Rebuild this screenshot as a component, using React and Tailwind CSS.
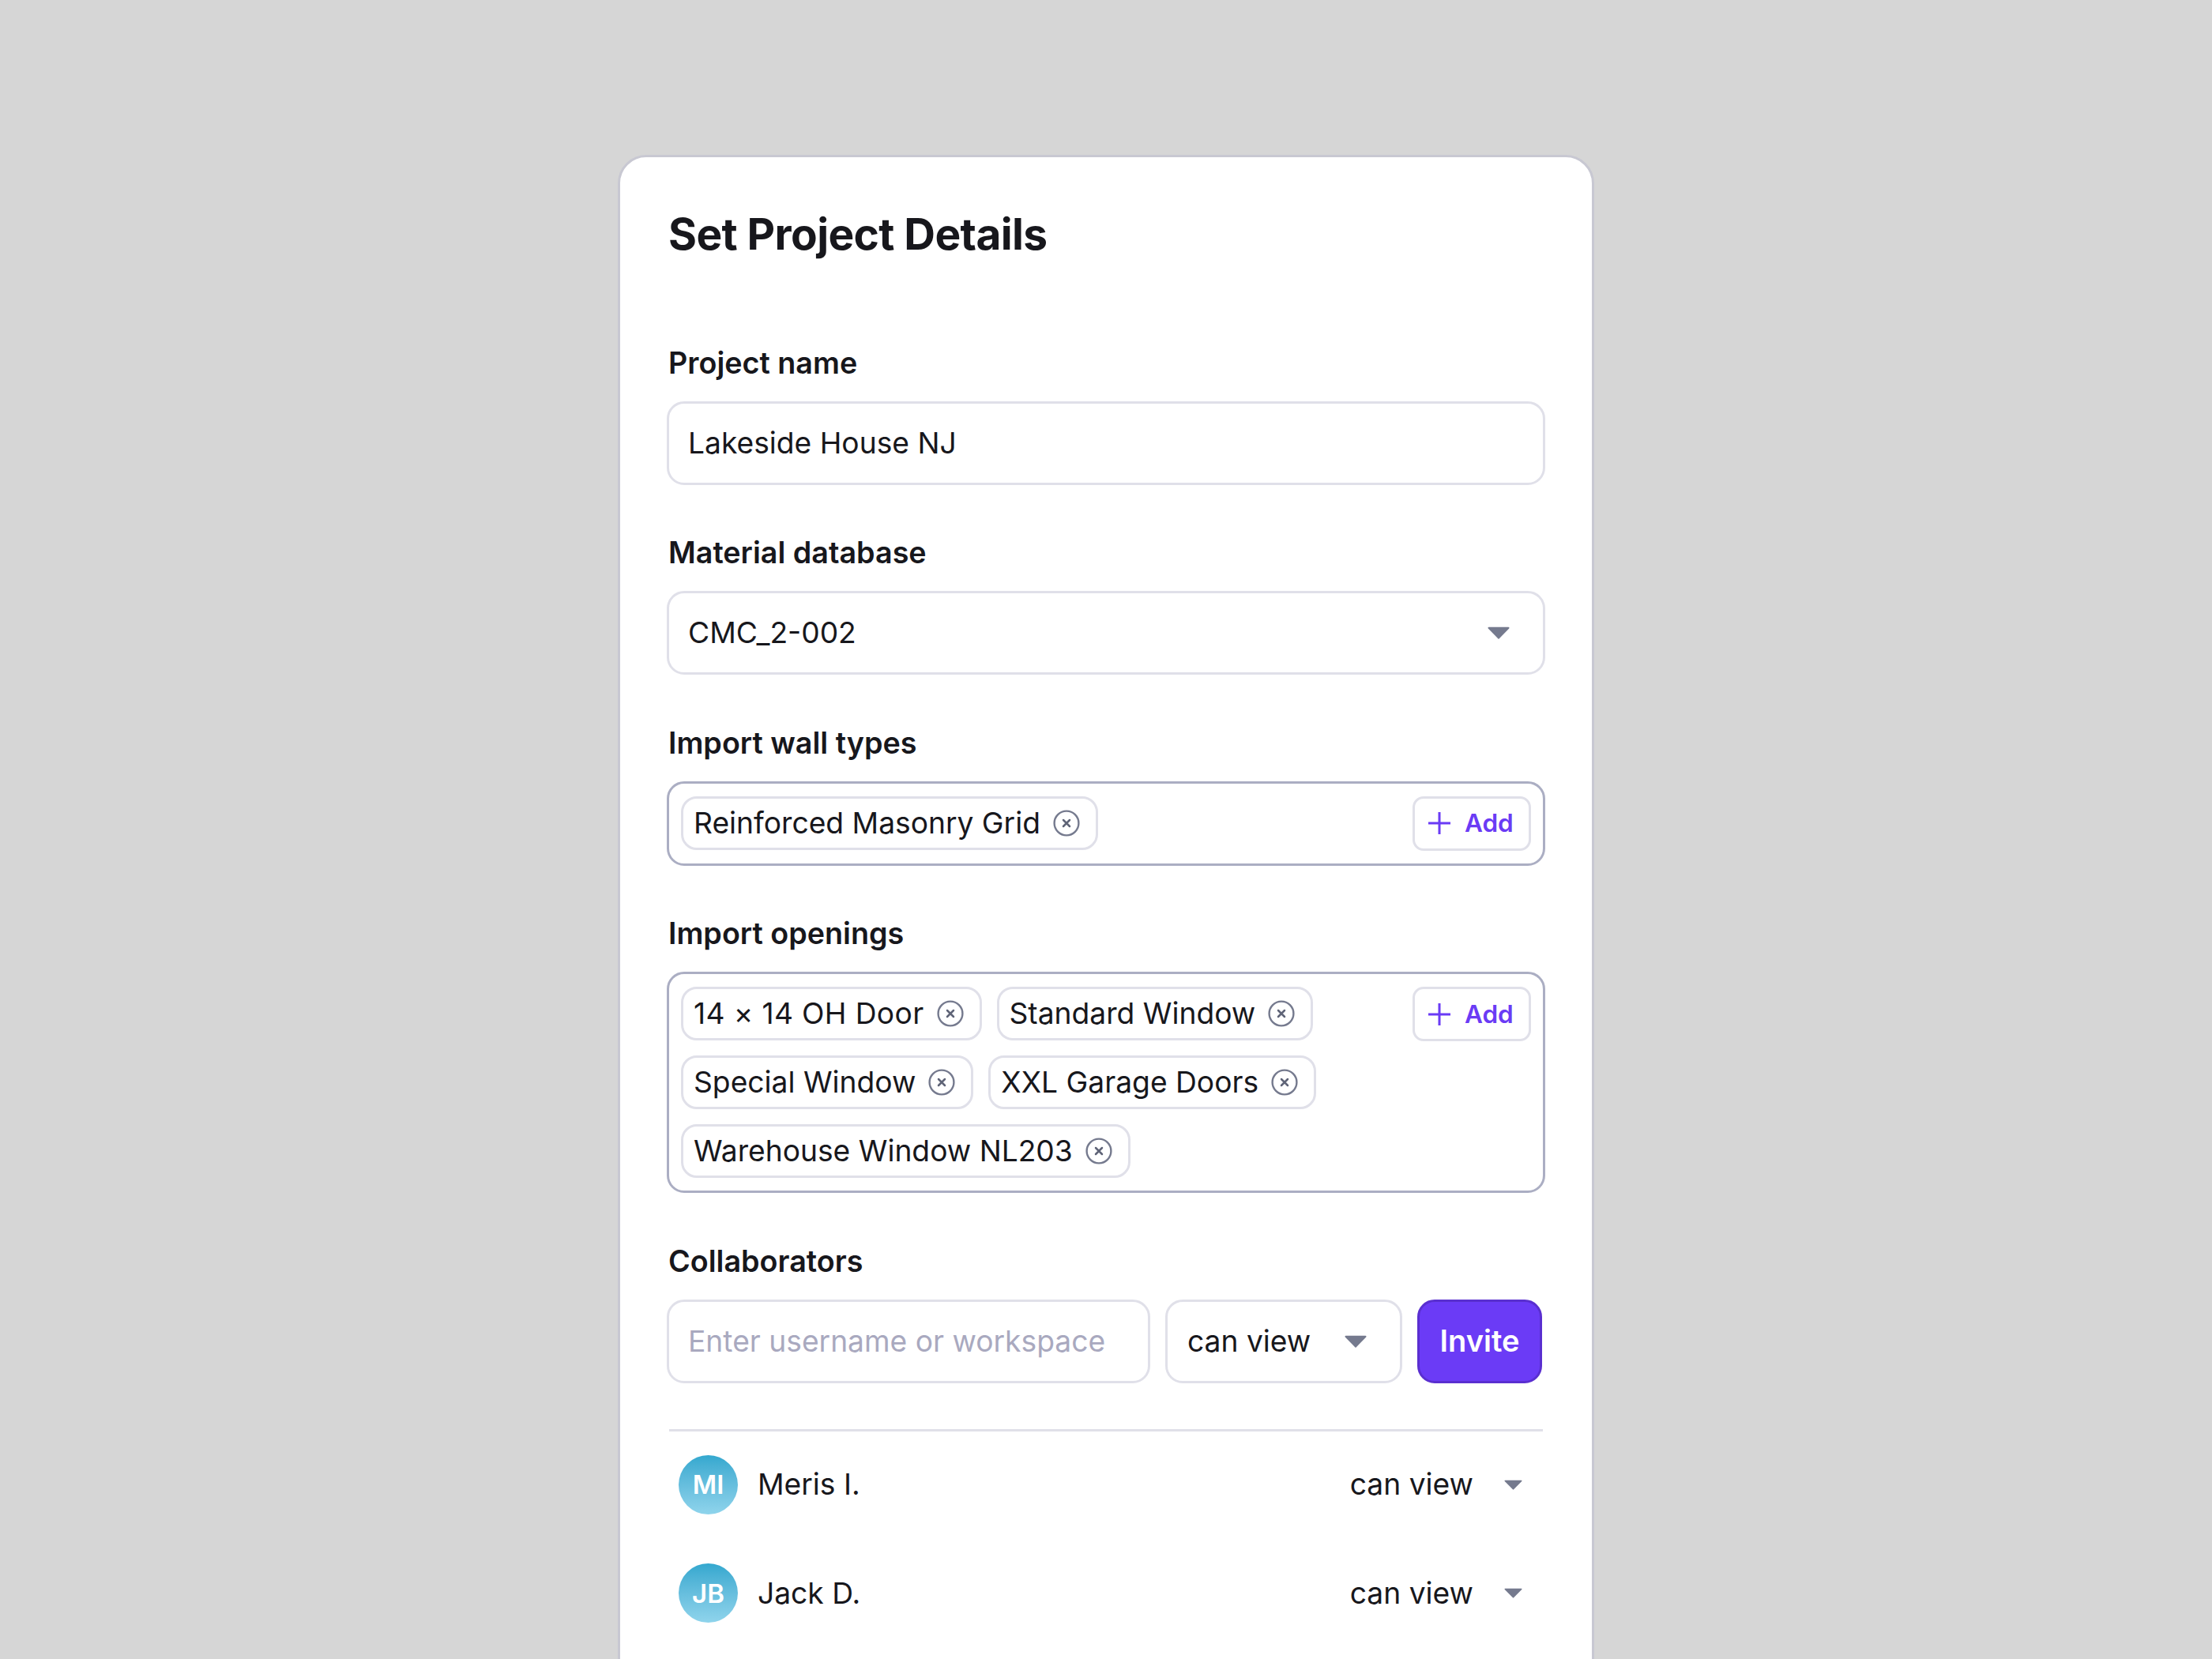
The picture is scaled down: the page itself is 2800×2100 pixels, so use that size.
import React from 'react';

const openings = ['14 × 14 OH Door', 'Standard Window', 'Special Window', 'XXL Garage Doors', 'Warehouse Window NL203'];

const collaborators = [
  { initials: 'MI', name: 'Meris I.' },
  { initials: 'JB', name: 'Jack D.' },
];

function Caret({ small }) {
  return (
    <svg viewBox="0 0 28 16" className={small ? 'h-[13px] w-[23px] shrink-0' : 'h-[16px] w-[28px] shrink-0'}>
      <path d="M1.5 0.8h25a1 1 0 0 1 .8 1.6L14.8 15.2a1 1 0 0 1-1.6 0L.7 2.4a1 1 0 0 1 .8-1.6z" fill="#757a8e" />
    </svg>
  );
}

function Chip({ label, wide }) {
  return (
    <div className="flex h-[68px] items-center gap-[16px] rounded-[20px] border-[3px] border-[#e0e0e9] pr-[20px] pl-[13px] text-[37.2px] leading-none">
      <span className={wide ? 'tracking-[0.35px]' : ''}>{label}</span>
      <svg viewBox="0 0 34 34" fill="none" className="h-[34px] w-[34px] shrink-0">
        <circle cx="17" cy="17" r="15.4" stroke="#757a8e" strokeWidth="2.4" />
        <path d="M13 13l8 8M21 13l-8 8" stroke="#5f6477" strokeWidth="2.5" strokeLinecap="round" />
      </svg>
    </div>
  );
}

function AddButton() {
  return (
    <button
      type="button"
      className="flex h-[69px] w-[150px] shrink-0 items-center gap-[18px] rounded-[14px] border-[3px] border-[#e0e0e9] pl-[17px] text-[31.5px] font-semibold text-[#6a3bf5]"
    >
      <svg viewBox="0 0 28 28" fill="none" className="h-[28px] w-[28px] shrink-0">
        <path d="M14 0v28M0 14h28" stroke="#6a3bf5" strokeWidth="3" />
      </svg>
      Add
    </button>
  );
}

function Label({ children }) {
  return <div className="mb-[24px] ml-[2px] h-[48px] text-[37.7px] leading-[46px] font-semibold">{children}</div>;
}

export default function App() {
  return (
    <div className="h-[2100px] overflow-hidden bg-[#d6d6d6] pt-[196px] font-['Inter',sans-serif] text-[#17171c]">
      <div className="mx-auto flex w-[1236px] flex-col gap-[62.5px] rounded-t-[36px] border-[3px] border-[#c8c8d2] bg-white px-[59px] pt-[64px] pb-[200px]">
        <h1 className="mb-[44px] ml-[2px] text-[55px] leading-[66px] font-bold tracking-[-0.011em]">Set Project Details</h1>

        <div>
          <Label>Project name</Label>
          <div className="flex h-[106px] items-center rounded-[22px] border-[3px] border-[#e0e0e9] px-[24px] text-[37.2px]">
            Lakeside House NJ
          </div>
        </div>

        <div>
          <Label>Material database</Label>
          <div className="flex h-[106px] items-center justify-between rounded-[22px] border-[3px] border-[#e0e0e9] pr-[42px] pl-[24px] text-[37.2px]">
            CMC_2-002
            <Caret />
          </div>
        </div>

        <div>
          <Label>Import wall types</Label>
          <div className="flex items-start justify-between rounded-[22px] border-[3px] border-[#abaec3] px-[15px] py-[16px]">
            <Chip label="Reinforced Masonry Grid" />
            <AddButton />
          </div>
        </div>

        <div>
          <Label>Import openings</Label>
          <div className="flex items-start justify-between rounded-[22px] border-[3px] border-[#abaec3] px-[15px] py-[16px]">
            <div className="flex flex-1 flex-wrap gap-[19px] pr-[18px]">
              {openings.map((item, i) => (
                <Chip key={item} label={item} wide={i === 0} />
              ))}
            </div>
            <AddButton />
          </div>
        </div>

        <div>
          <Label>Collaborators</Label>
          <div className="flex h-[106px] gap-[19px] pr-[4px] text-[37.2px]">
            <div className="flex w-[612px] items-center rounded-[22px] border-[3px] border-[#e0e0e9] px-[24px] whitespace-nowrap text-[#a9a9bf]">
              Enter username or workspace
            </div>
            <div className="flex w-[300px] items-center justify-between rounded-[22px] border-[3px] border-[#e0e0e9] pr-[42px] pl-[25px]">
              can view
              <Caret />
            </div>
            <button
              type="button"
              className="flex-1 rounded-[22px] border-[3px] border-[#5a2fd0] bg-[#6b3bf6] text-[38px] font-semibold text-white"
            >
              Invite
            </button>
          </div>

          <div className="mx-[3px] mt-[58px] h-[3px] bg-[#e0e0e9]" />

          <div className="mt-[30px] flex flex-col gap-[62.7px] pr-[29px] pl-[15px]">
            {collaborators.map((person) => (
              <div key={person.initials} className="flex h-[75px] items-center text-[37.2px]">
                <div className="flex h-[75px] w-[75px] shrink-0 items-center justify-center rounded-full bg-linear-to-b from-[#33a8cf] to-[#8fd4ec] pt-[2px] text-[33px] font-semibold text-white">
                  {person.initials}
                </div>
                <span className="ml-[25px] flex-1">{person.name}</span>
                <span className="mr-[39px]">can view</span>
                <Caret small />
              </div>
            ))}
          </div>
        </div>
      </div>
    </div>
  );
}
